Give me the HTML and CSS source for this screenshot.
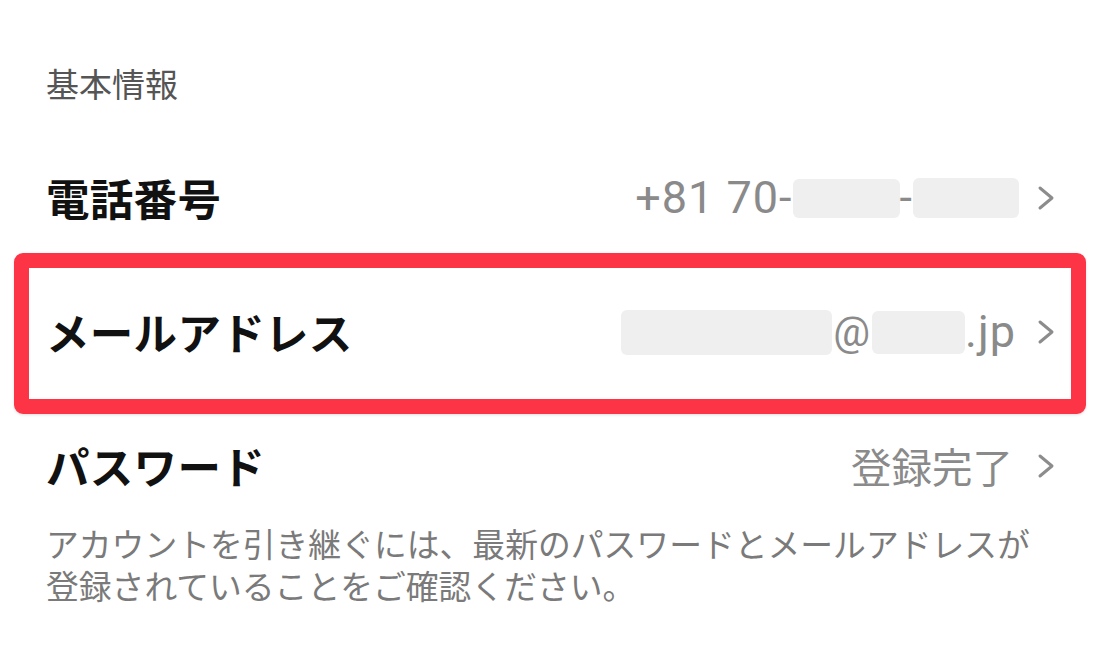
FILE: index.html
```html
<!DOCTYPE html>
<html lang="ja">
<head>
<meta charset="utf-8">
<link rel="stylesheet" href="styles.css">
</head>
<body>
<div class="page">
  <div class="section-title">基本情報</div>
  <div class="row">
    <div class="label">電話番号</div>
    <div class="value">
      <span class="latin">+81 70-</span><span class="mask mask-phone1"></span><span class="latin">-</span><span class="mask mask-phone2"></span>
      <svg class="chev" width="18" height="26" viewBox="0 0 18 26"><path d="M3 3 L15 13 L3 23" fill="none" stroke="#8c8c8c" stroke-width="3" stroke-linecap="round" stroke-linejoin="round"/></svg>
    </div>
  </div>
  <div class="row row-highlight">
    <div class="label">メールアドレス</div>
    <div class="value">
      <span class="mask mask-mail1"></span><span class="latin at">@</span><span class="mask mask-mail2"></span><span class="latin jp">.jp</span>
      <svg class="chev" width="18" height="26" viewBox="0 0 18 26"><path d="M3 3 L15 13 L3 23" fill="none" stroke="#8c8c8c" stroke-width="3" stroke-linecap="round" stroke-linejoin="round"/></svg>
    </div>
    <div class="highlight"></div>
  </div>
  <div class="row row-last">
    <div class="label">パスワード</div>
    <div class="value">
      <span class="cjk-value">登録完了</span>
      <svg class="chev" width="18" height="26" viewBox="0 0 18 26"><path d="M3 3 L15 13 L3 23" fill="none" stroke="#8c8c8c" stroke-width="3" stroke-linecap="round" stroke-linejoin="round"/></svg>
    </div>
  </div>
  <p class="note">アカウントを引き継ぐには、最新のパスワードとメールアドレスが<br>登録されていることをご確認ください。</p>
</div>
</body>
</html>
```

FILE: styles.css
```css
* { box-sizing: border-box; }
html, body {
  margin: 0;
  padding: 0;
  background: #ffffff;
}
body {
  font-family: "Noto Sans CJK JP", "Noto Sans", sans-serif;
  width: 1100px;
  height: 655px;
  overflow: hidden;
}
.page {
  padding: 0 46px;
}
.section-title {
  height: 133px;
  padding-top: 63px;
  font-size: 33px;
  line-height: 40px;
  color: #555555;
}
.row {
  position: relative;
  height: 134px;
  display: flex;
  align-items: center;
  justify-content: space-between;
}
.row-last {
  height: 121px;
  padding-top: 13px;
}
.label {
  font-size: 43.5px;
  font-weight: 700;
  color: #111111;
  line-height: 56px;
  letter-spacing: 0.3px;
  margin-top: -4px;
}
.value {
  display: flex;
  align-items: center;
  color: #8a8a8a;
  margin-top: -4px;
}
.latin {
  font-family: Roboto, "Liberation Sans", Arial, sans-serif;
  font-size: 45px;
  line-height: 56px;
  letter-spacing: 1px;
  color: #8a8a8a;
}
.at {
  font-size: 41px;
  margin: 0 1px;
}
.jp {
  margin-right: 3px;
}
.cjk-value {
  font-size: 40.5px;
  line-height: 56px;
  color: #8a8a8a;
  margin-right: 6px;
}
.mask {
  display: inline-block;
  background: #efefef;
  border-radius: 6px;
}
.mask-phone1 { width: 107px; height: 39px; }
.mask-phone2 { width: 106px; height: 40px; }
.mask-mail1 { width: 211px; height: 45px; }
.mask-mail2 { width: 93px; height: 43px; }
.chev {
  margin-left: 18px;
  margin-right: -1px;
  flex: none;
}
.highlight {
  position: absolute;
  left: -32px;
  right: -32px;
  top: -14px;
  bottom: -13px;
  border: 15px solid #fc3446;
  border-radius: 9px;
  box-shadow: 0 1px 3px rgba(0,0,0,0.12);
  pointer-events: none;
}
.note {
  margin: 0;
  font-size: 32.8px;
  line-height: 42px;
  color: #7a7a7a;
}
```
